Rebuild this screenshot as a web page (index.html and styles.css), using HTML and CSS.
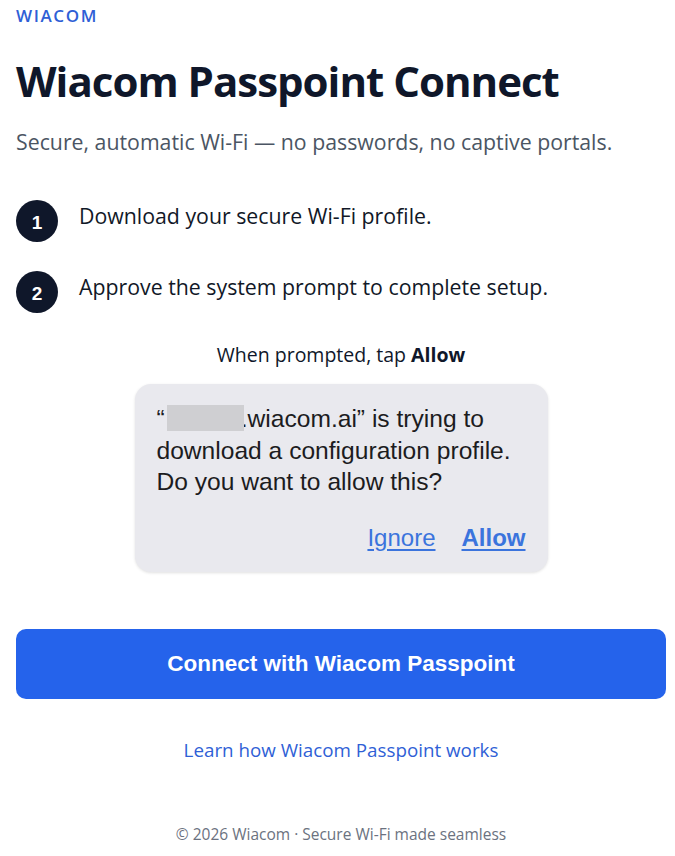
FILE: index.html
```html
<!DOCTYPE html>
<html lang="en">
<head>
<meta charset="utf-8">
<title>Wiacom Passpoint Connect</title>
<link rel="stylesheet" href="styles.css">
</head>
<body>
<main class="page">
  <div class="brand">WIACOM</div>
  <h1 class="title">Wiacom Passpoint Connect</h1>
  <p class="subtitle">Secure, automatic Wi-Fi — no passwords, no captive portals.</p>

  <ol class="steps">
    <li class="step"><span class="num">1</span><span class="step-text">Download your secure Wi-Fi profile.</span></li>
    <li class="step"><span class="num">2</span><span class="step-text">Approve the system prompt to complete setup.</span></li>
  </ol>

  <section class="prompt">
    <p class="prompt-label">When prompted, tap <b>Allow</b></p>
    <div class="dialog">
      <p class="dialog-text">“<span class="redact"></span>.wiacom.ai” is trying to<br>download a configuration profile.<br>Do you want to allow this?</p>
      <div class="dialog-actions">
        <span class="dlink">Ignore</span>
        <span class="dlink strong">Allow</span>
      </div>
    </div>
  </section>

  <button class="cta" type="button">Connect with Wiacom Passpoint</button>
  <a class="learn" href="#">Learn how Wiacom Passpoint works</a>

  <footer class="footer">© 2026 Wiacom · Secure Wi-Fi made seamless</footer>
</main>
</body>
</html>
```

FILE: styles.css
```css
* { box-sizing: border-box; }
html, body { margin: 0; padding: 0; background: #fff; }
body {
  font-family: "Open Sans", "Noto Sans", sans-serif;
  color: #0f172a;
}
.page {
  padding: 6px 9px 0 16px;
  display: flex;
  flex-direction: column;
}
.brand {
  font-size: 17px;
  font-weight: 600;
  letter-spacing: 1.6px;
  color: #2f5fd6;
  line-height: 20px;
}
.title {
  margin: 29px 0 0;
  font-size: 42px;
  font-weight: 700;
  line-height: 52px;
  color: #0f172a;
  letter-spacing: -1px;
}
.subtitle {
  margin: 21px 0 0;
  font-size: 21.3px;
  line-height: 28px;
  color: #4b5563;
}
.steps {
  list-style: none;
  margin: 44px 0 0;
  padding: 0;
  display: flex;
  flex-direction: column;
  gap: 29px;
}
.step {
  display: flex;
  align-items: center;
  gap: 21px;
}
.num {
  width: 42px;
  height: 42px;
  border-radius: 50%;
  background: #0f172a;
  color: #fff;
  font-family: "Liberation Sans", Arial, sans-serif;
  font-weight: 700;
  font-size: 19px;
  display: flex;
  align-items: center;
  justify-content: center;
  flex-shrink: 0;
  padding-top: 3px;
}
.step-text {
  font-size: 21.3px;
  line-height: 28px;
  color: #111827;
  margin-top: -10px;
}
.prompt {
  margin-top: 29px;
  display: flex;
  flex-direction: column;
  align-items: center;
}
.prompt-label {
  margin: 0;
  font-size: 19.5px;
  font-weight: 500;
  line-height: 26px;
  color: #0f172a;
}
.prompt-label b { font-weight: 700; }
.dialog {
  margin-top: 16px;
  width: 413px;
  height: 188px;
  background: #e9e9ee;
  border-radius: 16px;
  box-shadow: 0 1px 3px rgba(0,0,0,0.12);
  padding: 19px 8px 0 22px;
  display: flex;
  flex-direction: column;
  font-family: "Liberation Sans", Arial, sans-serif;
  color: #1c1c1e;
}
.dialog-text {
  margin: 0;
  font-size: 24.6px;
  line-height: 31.5px;
  letter-spacing: 0;
  white-space: nowrap;
}
.redact {
  display: inline-block;
  width: 77px;
  height: 26px;
  margin-left: 2px;
  margin-right: -3px;
  background: #cfcfd2;
  vertical-align: -4px;
  position: relative;
}
.dialog-actions {
  margin-top: auto;
  margin-bottom: 20px;
  padding-right: 14px;
  display: flex;
  justify-content: flex-end;
  gap: 26px;
}
.dlink {
  font-size: 24px;
  color: #3b74dd;
  text-decoration: underline;
  text-underline-offset: 3px;
  line-height: 28px;
}
.dlink.strong { font-weight: 700; }
.cta {
  margin-top: 57px;
  width: 100%;
  height: 70px;
  border: 0;
  border-radius: 10px;
  background: #2563eb;
  color: #fff;
  font-family: "Liberation Sans", Arial, sans-serif;
  font-weight: 700;
  font-size: 22.5px;
  cursor: pointer;
}
.learn {
  margin-top: 38px;
  align-self: center;
  font-size: 18.8px;
  line-height: 26px;
  color: #2f5fd6;
  text-decoration: none;
}
.footer {
  margin-top: 61px;
  text-align: center;
  font-size: 15.5px;
  line-height: 20px;
  color: #6b7280;
}
```
